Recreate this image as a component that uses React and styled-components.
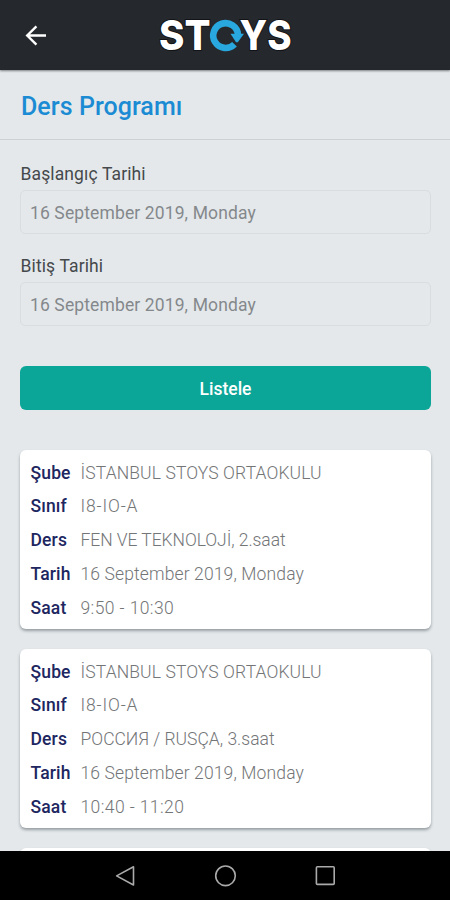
import React from "react";
import styled, { createGlobalStyle } from "styled-components";

const colors = {
  header: "#25282d",
  page: "#e4e8eb",
  title: "#1b8bd3",
  label: "#45494c",
  input: "#84888b",
  button: "#0ba698",
  key: "#20265f",
  value: "#737577",
  logoBlue: "#29a8e0",
};

const lessons = [
  [
    { name: "Şube", value: "İSTANBUL STOYS ORTAOKULU", tracking: 0.11 },
    { name: "Sınıf", value: "I8-IO-A", tracking: 0.85 },
    { name: "Ders", value: "FEN VE TEKNOLOJİ, 2.saat", tracking: -0.06 },
    { name: "Tarih", value: "16 September 2019, Monday", tracking: 0.13 },
    { name: "Saat", value: "9:50 - 10:30", tracking: 0.4 },
  ],
  [
    { name: "Şube", value: "İSTANBUL STOYS ORTAOKULU", tracking: 0.11 },
    { name: "Sınıf", value: "I8-IO-A", tracking: 0.85 },
    { name: "Ders", value: "РОССИЯ / RUSÇA, 3.saat", tracking: 0 },
    { name: "Tarih", value: "16 September 2019, Monday", tracking: 0.13 },
    { name: "Saat", value: "10:40 - 11:20", tracking: 0.4 },
  ],
];

function BackIcon() {
  return (
    <svg width="26" height="24" viewBox="0 0 26 24" fill="none" stroke="#fff" strokeWidth="2.4">
      <path d="M24 12.5H5M14.4 3.4L5.2 12.5L14.4 21.6" />
    </svg>
  );
}

function Logo() {
  return (
    <LogoSvg width="160" height="60" viewBox="0 0 160 60">
      <LogoText x="14" y="44.5" textLength="51.5" lengthAdjust="spacingAndGlyphs">ST</LogoText>
      <LogoText x="94.5" y="44.5" textLength="52" lengthAdjust="spacingAndGlyphs">YS</LogoText>
      <path
        d="M89.5 39.2A12.4 12.4 0 1 1 93 29.5"
        fill="none"
        stroke={colors.logoBlue}
        strokeWidth="6.6"
      />
      <path d="M85.5 28.8H99L92.8 37.2H91Z" fill={colors.logoBlue} />
    </LogoSvg>
  );
}

function LessonCard({ lesson }) {
  return (
    <Card>
      {lesson.map(({ name, value, tracking }) => (
        <Row key={name}>
          <Key>{name}</Key>
          <Value $tracking={tracking}>{value}</Value>
        </Row>
      ))}
    </Card>
  );
}

export default function App() {
  return (
    <Screen>
      <GlobalStyle />
      <Header>
        <BackButton aria-label="Geri">
          <BackIcon />
        </BackButton>
        <Logo />
      </Header>
      <TitleBar>
        <Title>Ders Programı</Title>
      </TitleBar>
      <Content>
        <Field>
          <Label>Başlangıç Tarihi</Label>
          <DateBox>16 September 2019, Monday</DateBox>
        </Field>
        <Field>
          <Label>Bitiş Tarihi</Label>
          <DateBox>16 September 2019, Monday</DateBox>
        </Field>
        <ListButton>Listele</ListButton>
        <Lessons>
          {lessons.map((lesson, index) => (
            <LessonCard key={index} lesson={lesson} />
          ))}
          <Card />
        </Lessons>
      </Content>
      <NavBar>
        <svg width="24" height="24" viewBox="0 0 24 24">
          <path d="M20.5 2.8V21L3.6 11.9Z" />
        </svg>
        <svg width="24" height="24" viewBox="0 0 24 24">
          <circle cx="12.5" cy="11.8" r="9.8" />
        </svg>
        <svg width="24" height="24" viewBox="0 0 24 24">
          <rect x="3.4" y="2.8" width="17.8" height="17.6" rx="1" />
        </svg>
      </NavBar>
    </Screen>
  );
}

const GlobalStyle = createGlobalStyle`
  * {
    box-sizing: border-box;
  }

  body {
    margin: 0;
    font-family: Roboto, "Liberation Sans", sans-serif;
  }
`;

const Screen = styled.div`
  display: flex;
  flex-direction: column;
  width: 450px;
  height: 900px;
  overflow: hidden;
  background: ${colors.page};
`;

const Header = styled.header`
  display: grid;
  grid-template-columns: 1fr auto 1fr;
  align-items: center;
  flex: none;
  height: 70px;
  padding: 0 22px;
  background: ${colors.header};
  box-shadow: 0 1px 2px rgba(0, 0, 0, 0.45);
`;

const BackButton = styled.button`
  display: flex;
  width: 26px;
  padding: 0;
  border: 0;
  background: none;
`;

const LogoSvg = styled.svg`
  display: block;
  overflow: visible;
`;

const LogoText = styled.text`
  font-family: Inter, sans-serif;
  font-size: 40.5px;
  font-weight: 800;
  fill: #fff;
  stroke: #111316;
  stroke-width: 2px;
  paint-order: stroke;
`;

const TitleBar = styled.div`
  display: flex;
  align-items: center;
  flex: none;
  height: 70px;
  padding: 4px 21px 0;
  border-bottom: 1px solid #cdd1d4;
`;

const Title = styled.h1`
  margin: 0;
  font-size: 25px;
  font-weight: 500;
  letter-spacing: 0.05px;
  color: ${colors.title};
`;

const Content = styled.main`
  display: flex;
  flex-direction: column;
  flex: 1;
  min-height: 0;
  padding: 22px 19px 0 20px;
  overflow: hidden;
`;

const Field = styled.div`
  flex: none;
  height: 92px;
`;

const Label = styled.div`
  height: 28px;
  padding-left: 0.5px;
  font-size: 17.5px;
  line-height: 25px;
  letter-spacing: 0.12px;
  color: ${colors.label};
`;

const DateBox = styled.div`
  height: 44px;
  padding: 0 9px;
  border: 1px solid #d9dddf;
  border-radius: 5px;
  font-size: 17.5px;
  line-height: 44px;
  letter-spacing: 0.12px;
  color: ${colors.input};
`;

const ListButton = styled.button`
  flex: none;
  height: 44px;
  margin-top: 20px;
  padding: 2px 0 0;
  border: 0;
  border-radius: 6px;
  background: ${colors.button};
  font-family: inherit;
  font-size: 17.5px;
  font-weight: 500;
  letter-spacing: 0;
  color: #fff;
`;

const Lessons = styled.div`
  display: flex;
  flex-direction: column;
  gap: 20px;
  margin-top: 40px;
`;

const Card = styled.section`
  flex: none;
  height: 179px;
  padding: 6.8px 10.5px 0;
  border-radius: 6px;
  background: #fff;
  box-shadow: 0 2px 3px rgba(60, 70, 75, 0.45);
`;

const Row = styled.div`
  display: flex;
  height: 33.7px;
  font-size: 17.5px;
  line-height: 33.7px;
  white-space: nowrap;
`;

const Key = styled.span`
  width: 50px;
  font-weight: 500;
  letter-spacing: 0.15px;
  color: ${colors.key};
`;

const Value = styled.span`
  font-weight: 300;
  letter-spacing: ${(props) => props.$tracking}px;
  color: ${colors.value};
`;

const NavBar = styled.nav`
  display: flex;
  align-items: center;
  justify-content: center;
  gap: 76px;
  flex: none;
  height: 49px;
  background: #000;

  svg {
    fill: none;
    stroke: #aaa;
    stroke-width: 1.6px;
    stroke-linejoin: round;
  }
`;
